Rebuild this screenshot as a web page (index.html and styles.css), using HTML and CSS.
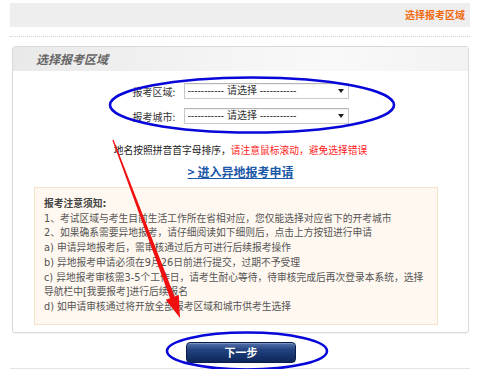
FILE: index.html
```html
<!DOCTYPE html>
<html lang="zh-CN">
<head>
  <meta charset="UTF-8" />
  <meta name="viewport" content="width=device-width, initial-scale=1.0" />
  <title>选择报考区域</title>
  <link rel="stylesheet" href="styles.css">
</head>
<body>
  <div class="page">
    <div class="crumb">选择报考区域</div>
    <div class="dots"></div>

    <div class="panel">
      <div class="panel-head">选择报考区域</div>

      <div class="area-form">
        <div class="form-row">
          <label for="area">报考区域:</label>
          <span class="select-wrap">
            <select id="area">
              <option>----------- 请选择 -----------</option>
            </select>
          </span>
        </div>
        <div class="form-row">
          <label for="city">报考城市:</label>
          <span class="select-wrap">
            <select id="city">
              <option>----------- 请选择 -----------</option>
            </select>
          </span>
        </div>
      </div>

      <p class="tip">地名按照拼音首字母排序，<span class="warn">请注意鼠标滚动，避免选择错误</span></p>
      <p class="apply"><a href="#">&gt; 进入异地报考申请</a></p>

      <div class="notice">
        <strong>报考注意须知:</strong>
        <p>1、考试区域与考生目前生活工作所在省相对应，您仅能选择对应省下的开考城市</p>
        <p>2、如果确系需要异地报考，请仔细阅读如下细则后，点击上方按钮进行申请</p>
        <p>a) 申请异地报考后，需审核通过后方可进行后续报考操作</p>
        <p>b) 异地报考申请必须在9月26日前进行提交，过期不予受理</p>
        <p>c) 异地报考审核需3-5个工作日，请考生耐心等待，待审核完成后再次登录本系统，选择导航栏中[我要报考]进行后续报名</p>
        <p>d) 如申请审核通过将开放全部报考区域和城市供考生选择</p>
      </div>
    </div>

    <div class="actions">
      <button class="next-btn">下一步</button>
    </div>
    <div class="bottom-line"></div>
  </div>

  <svg class="marks" width="479" height="369" viewBox="0 0 479 369">
    <ellipse cx="252" cy="105" rx="142" ry="27.5" fill="none" stroke="#0707d9" stroke-width="2.6"/>
    <ellipse cx="247" cy="351" rx="80" ry="18.5" fill="none" stroke="#0707d9" stroke-width="2.6"/>
    <polygon fill="#f01010" points="112.4,140.2 113.6,139.8 174.6,296.5 178.8,295 180,318 165.8,299.8 170,298.2"/>
  </svg>
</body>
</html>
```

FILE: styles.css
```css
* {
  margin: 0;
  padding: 0;
  box-sizing: border-box;
}

body {
  position: relative;
  background-color: #fff;
  font-family: "DejaVu Sans", "Noto Sans CJK SC", sans-serif;
  font-size: 10px;
  color: #333;
}

.page {
  padding: 3px 9px 0 10px;
}

.crumb {
  height: 24px;
  line-height: 24px;
  background-color: #eeeeee;
  text-align: right;
  padding-right: 5px;
  font-family: "Noto Sans CJK SC", sans-serif;
  font-size: 10px;
  font-weight: bold;
  color: #f26a10;
}

.dots {
  margin-top: 9px;
  border-top: 1px dotted #cfcfcf;
}

.panel {
  margin: 9px 1px 0 2px;
  border: 1px solid #d9d9d9;
  border-radius: 3px;
  padding-bottom: 7px;
  box-shadow: 0 1px 1px rgba(0,0,0,0.05);
}

.panel-head {
  height: 24px;
  line-height: 24px;
  padding-left: 23px;
  background: linear-gradient(to right, #e9e9e9, #f4f4f4 45%, #f9f9f9 70%, #f2f2f2);
  font-family: "Noto Sans CJK SC", sans-serif;
  font-size: 12px;
  font-style: italic;
  font-weight: bold;
  color: #666;
}

.area-form {
  padding-top: 12px;
  display: flex;
  flex-direction: column;
  gap: 9px;
}

.form-row {
  display: flex;
  justify-content: center;
  align-items: center;
  gap: 5px;
}

.form-row label {
  width: 46px;
  font-family: "Noto Sans CJK SC", sans-serif;
  font-size: 10px;
  color: #333;
}

.select-wrap {
  position: relative;
  display: block;
}

.select-wrap::after {
  content: "";
  position: absolute;
  right: 5px;
  top: 6px;
  border-left: 3px solid transparent;
  border-right: 3px solid transparent;
  border-top: 4px solid #222;
}

.select-wrap select {
  appearance: none;
  -webkit-appearance: none;
  display: block;
  width: 165px;
  height: 16px;
  padding: 0 3px;
  border: 1px solid #c9c9c9;
  border-top-color: #b5b5b5;
  background-color: #fff;
  box-shadow: inset 0 1px 1px rgba(0,0,0,0.06);
  font-family: "Liberation Sans", "Noto Sans CJK SC", sans-serif;
  font-size: 10px;
  color: #333;
  line-height: 14px;
}

.tip {
  margin-top: 19px;
  text-align: center;
  line-height: 14px;
  font-family: "Noto Sans CJK SC", sans-serif;
  font-size: 9.75px;
  color: #222;
}

.tip .warn {
  color: #ff1a1a;
}

.apply {
  margin-top: 7px;
  text-align: center;
  line-height: 16px;
  font-family: "Noto Sans CJK SC", sans-serif;
  font-size: 12px;
  font-weight: bold;
}

.apply a {
  color: #1b58a8;
  text-decoration: underline;
}

.notice {
  margin: 7px 30px 0 21px;
  padding: 9px;
  background-color: #fff8f0;
  border: 1px solid #f4e3cb;
  font-size: 9.75px;
  line-height: 14.7px;
  color: #555;
}

.notice strong {
  display: block;
  color: #444;
}

.actions {
  margin-top: 9px;
  display: flex;
  justify-content: center;
  padding-left: 2px;
}

.next-btn {
  width: 110px;
  height: 21px;
  border: 1px solid #0b1f4f;
  border-radius: 4px;
  background: linear-gradient(#5573ad, #23427f 35%, #17336c 70%, #0f2759);
  box-shadow: inset 0 1px 0 rgba(255,255,255,0.25);
  color: #fff;
  font-family: "Noto Sans CJK SC", sans-serif;
  font-size: 11px;
  font-weight: bold;
  cursor: pointer;
}

.bottom-line {
  margin-top: 5px;
  border-top: 1px solid #e4e4e4;
}

.marks {
  position: absolute;
  left: 0;
  top: 0;
  pointer-events: none;
}
```
